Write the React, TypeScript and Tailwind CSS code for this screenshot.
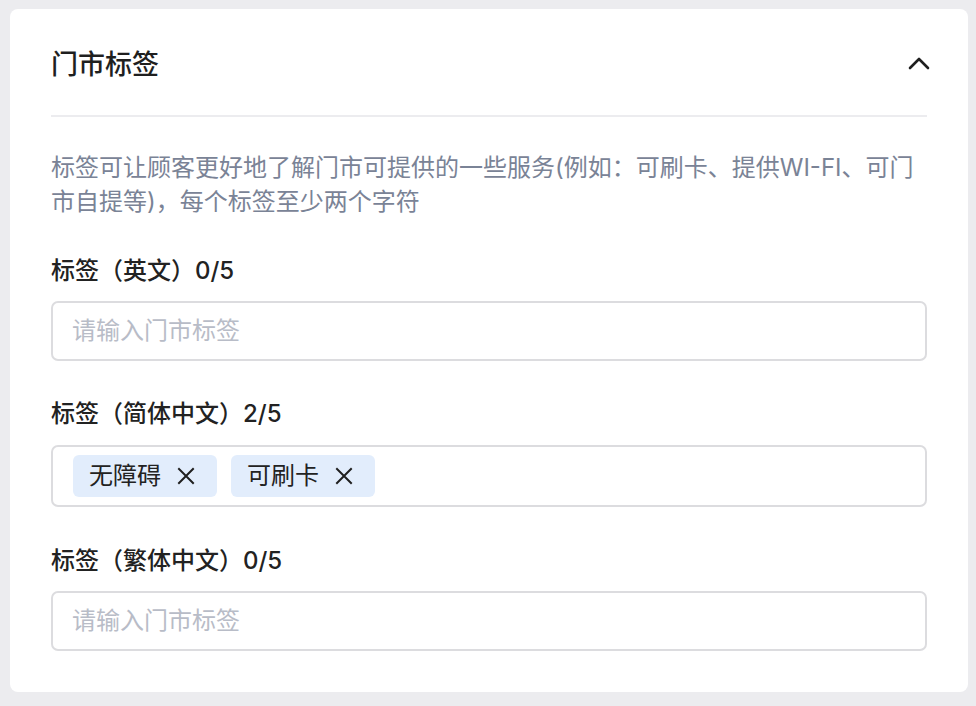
import React from "react";

const font = { fontFamily: 'Inter, "Noto Sans CJK SC", sans-serif' };

function XIcon() {
  return (
    <svg width="18" height="18" viewBox="0 0 18 18" fill="none" stroke="#1f1f1f" strokeWidth="2" strokeLinecap="square">
      <path d="M2 2 L16 16 M16 2 L2 16" />
    </svg>
  );
}

function Tag({ text }: { text: string }) {
  return (
    <div className="flex items-center h-[42px] bg-[#e2edfc] rounded-[6px] pl-[16px] pr-[22px] gap-[16px]">
      <span className="text-[24px] leading-none text-[#222]">{text}</span>
      <XIcon />
    </div>
  );
}

function Label({ children }: { children: React.ReactNode }) {
  return <div className="text-[24px] leading-[34px] font-medium text-[#222]">{children}</div>;
}

function Input() {
  return (
    <div className="h-[60px] border-2 border-[#dcdcdf] rounded-[7px] flex items-center pl-[19px] text-[24px] text-[#b8bcc7]">
      请输入门市标签
    </div>
  );
}

export default function App() {
  return (
    <div className="w-[976px] h-[706px] bg-[#ececef] pt-[9px] pl-[10px] pr-[8px]" style={font}>
      <div className="bg-white rounded-[8px] h-[683px] px-[41px]">
        <div className="h-[108px] flex items-center justify-between border-b-2 border-[#ececef] pt-[6px]">
          <span className="text-[27px] font-medium text-[#1f1f1f]">门市标签</span>
          <svg width="24" height="14" viewBox="0 0 24 14" fill="none" stroke="#1f1f1f" strokeWidth="2.6" strokeLinecap="round" strokeLinejoin="round" className="mr-[-4px] mb-[4px]">
            <path d="M3 12 L12 3 L21 12" />
          </svg>
        </div>
        <p className="mt-[34px] text-[24px] leading-[34px] text-[#7a8396]">
          标签可让顾客更好地了解门市可提供的一些服务(例如：可刷卡、提供WI-FI、可门市自提等)，每个标签至少两个字符
        </p>
        <div className="mt-[35px]">
          <Label>标签（英文）0/5</Label>
        </div>
        <div className="mt-[13px]">
          <Input />
        </div>
        <div className="mt-[36px]">
          <Label>标签（简体中文）2/5</Label>
        </div>
        <div className="mt-[14px] h-[62px] border-2 border-[#dcdcdf] rounded-[7px] flex items-center pl-[20px] gap-[14px]">
          <Tag text="无障碍" />
          <Tag text="可刷卡" />
        </div>
        <div className="mt-[37px]">
          <Label>标签（繁体中文）0/5</Label>
        </div>
        <div className="mt-[13px]">
          <Input />
        </div>
      </div>
    </div>
  );
}
